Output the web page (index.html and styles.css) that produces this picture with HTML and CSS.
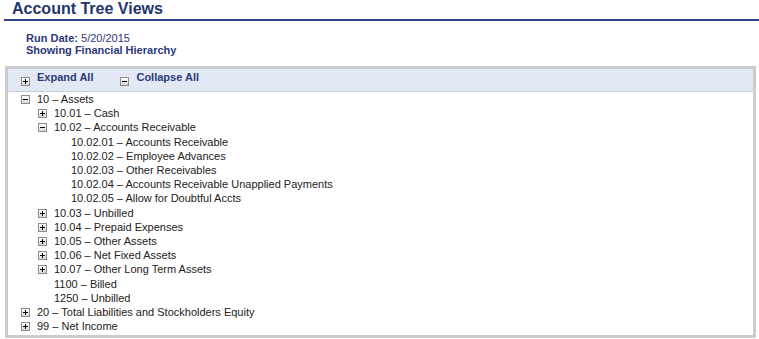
FILE: index.html
```html
<!DOCTYPE html>
<html lang="en">

<head>
    <meta charset="UTF-8">
    <title>Account Tree Views</title>
    <link rel="stylesheet" href="styles.css">
</head>

<body>
    <div class="page">
        <h1 class="title">Account Tree Views</h1>

        <div class="meta">
            <div><b>Run Date:</b> 5/20/2015</div>
            <div><b>Showing Financial Hierarchy</b></div>
        </div>

        <div class="tree-box">
            <div class="toolbar">
                <span class="tool"><span class="tog plus"></span>Expand All</span>
                <span class="tool"><span class="tog minus"></span>Collapse All</span>
            </div>

            <div class="tree">
                <div class="row"><span class="tog minus"></span>10 – Assets</div>
                <div class="lvl">
                    <div class="row"><span class="tog plus"></span>10.01 – Cash</div>
                    <div class="row"><span class="tog minus"></span>10.02 – Accounts Receivable</div>
                    <div class="lvl">
                        <div class="row leaf">10.02.01 – Accounts Receivable</div>
                        <div class="row leaf">10.02.02 – Employee Advances</div>
                        <div class="row leaf">10.02.03 – Other Receivables</div>
                        <div class="row leaf">10.02.04 – Accounts Receivable Unapplied Payments</div>
                        <div class="row leaf">10.02.05 – Allow for Doubtful Accts</div>
                    </div>
                    <div class="row"><span class="tog plus"></span>10.03 – Unbilled</div>
                    <div class="row"><span class="tog plus"></span>10.04 – Prepaid Expenses</div>
                    <div class="row"><span class="tog plus"></span>10.05 – Other Assets</div>
                    <div class="row"><span class="tog plus"></span>10.06 – Net Fixed Assets</div>
                    <div class="row"><span class="tog plus"></span>10.07 – Other Long Term Assets</div>
                    <div class="row leaf">1100 – Billed</div>
                    <div class="row leaf">1250 – Unbilled</div>
                </div>
                <div class="row"><span class="tog plus"></span>20 – Total Liabilities and Stockholders Equity</div>
                <div class="row"><span class="tog plus"></span>99 – Net Income</div>
            </div>
        </div>
    </div>
</body>

</html>
```

FILE: styles.css
```css
body {
    margin: 0;
    font-family: "Liberation Sans", Arial, Helvetica, sans-serif;
    font-size: 11px;
    color: #222222;
    background: #ffffff;
}

.page {
    padding-left: 4px;
}

.title {
    margin: 0;
    padding: 0 0 1px 8px;
    font-size: 16px;
    line-height: 18px;
    font-weight: bold;
    color: #24356e;
    border-bottom: 2px solid #2e4784;
}

.meta {
    margin: 11px 0 0 22px;
    line-height: 12px;
    color: #2c3a78;
}

.tree-box {
    margin: 10px 0 0 1px;
    width: 745px;
    border: 3px solid #cccccc;
}

.toolbar {
    height: 22px;
    background: #e3e9f4;
    border-bottom: 1px solid #cccccc;
    padding-left: 13px;
    line-height: 17px;
    font-weight: bold;
    color: #2c3a78;
    display: flex;
    gap: 27px;
}

.tool .tog {
    vertical-align: -5px;
}

.tree {
    padding: 0 0 2px 13px;
}

.row {
    line-height: 14.2px;
    white-space: nowrap;
}

.row .tog {
    vertical-align: -1px;
}

.lvl {
    padding-left: 17px;
}

.leaf {
    padding-left: 16px;
}

.tog {
    display: inline-block;
    position: relative;
    box-sizing: border-box;
    width: 9px;
    height: 9px;
    margin-right: 7px;
    border: 1px solid #8c8c8c;
    background: linear-gradient(#ffffff, #d8d8d8);
}

.tog::before {
    content: "";
    position: absolute;
    left: 1px;
    top: 3px;
    width: 5px;
    height: 1px;
    background: #000000;
}

.plus::after {
    content: "";
    position: absolute;
    left: 3px;
    top: 1px;
    width: 1px;
    height: 5px;
    background: #000000;
}
```
